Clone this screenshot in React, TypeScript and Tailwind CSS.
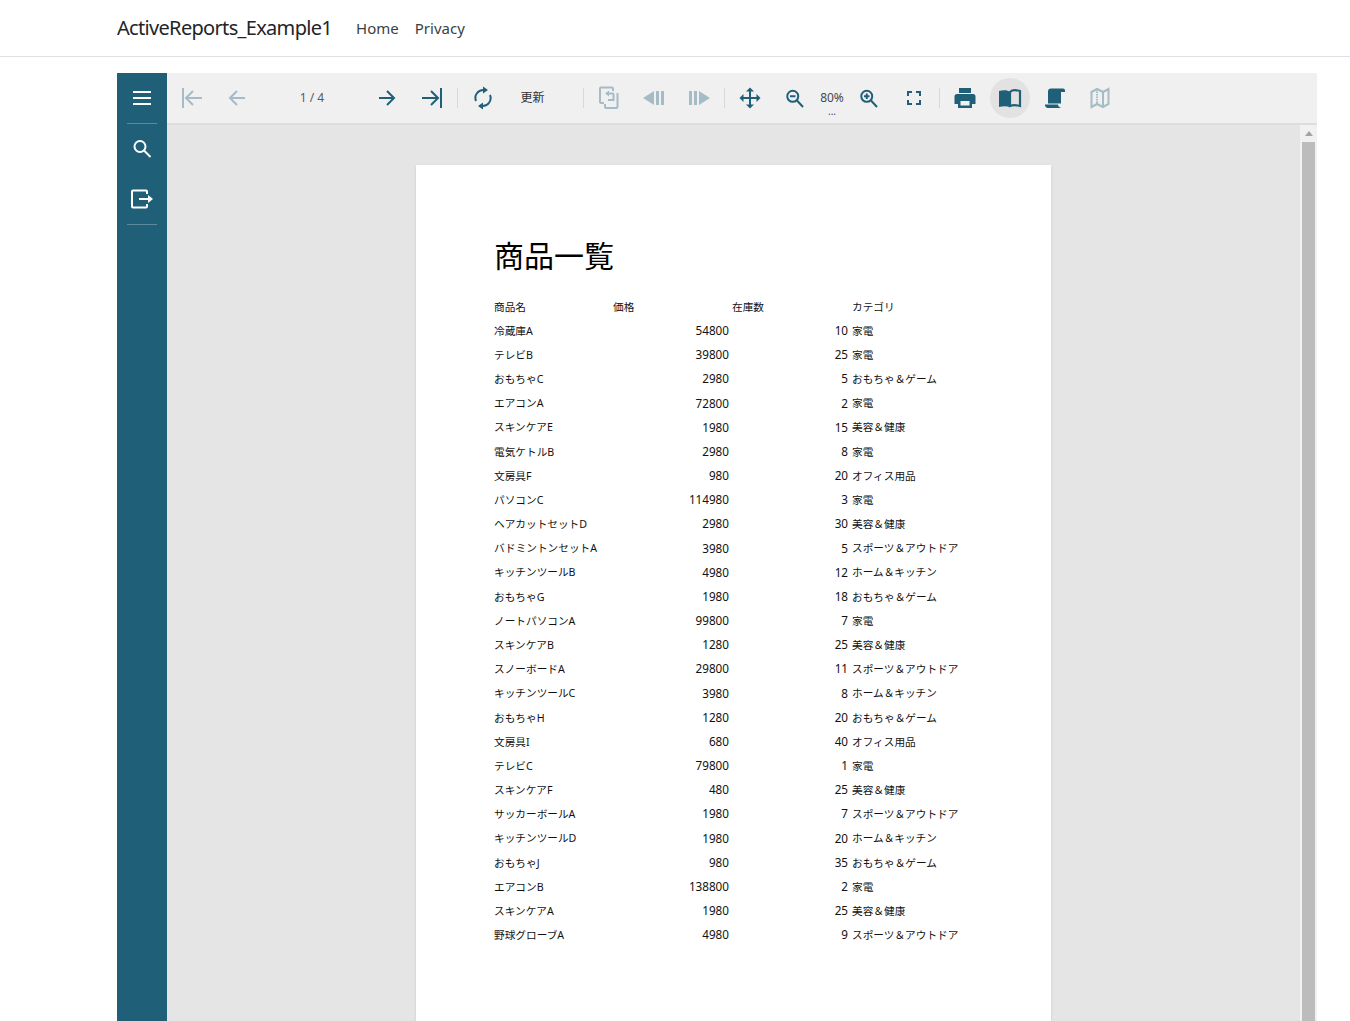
import type { ReactNode } from "react"

const rows: [string, number, number, string][] = [
  ["冷蔵庫A", 54800, 10, "家電"],
  ["テレビB", 39800, 25, "家電"],
  ["おもちゃC", 2980, 5, "おもちゃ＆ゲーム"],
  ["エアコンA", 72800, 2, "家電"],
  ["スキンケアE", 1980, 15, "美容＆健康"],
  ["電気ケトルB", 2980, 8, "家電"],
  ["文房具F", 980, 20, "オフィス用品"],
  ["パソコンC", 114980, 3, "家電"],
  ["ヘアカットセットD", 2980, 30, "美容＆健康"],
  ["バドミントンセットA", 3980, 5, "スポーツ＆アウトドア"],
  ["キッチンツールB", 4980, 12, "ホーム＆キッチン"],
  ["おもちゃG", 1980, 18, "おもちゃ＆ゲーム"],
  ["ノートパソコンA", 99800, 7, "家電"],
  ["スキンケアB", 1280, 25, "美容＆健康"],
  ["スノーボードA", 29800, 11, "スポーツ＆アウトドア"],
  ["キッチンツールC", 3980, 8, "ホーム＆キッチン"],
  ["おもちゃH", 1280, 20, "おもちゃ＆ゲーム"],
  ["文房具I", 680, 40, "オフィス用品"],
  ["テレビC", 79800, 1, "家電"],
  ["スキンケアF", 480, 25, "美容＆健康"],
  ["サッカーボールA", 1980, 7, "スポーツ＆アウトドア"],
  ["キッチンツールD", 1980, 20, "ホーム＆キッチン"],
  ["おもちゃJ", 980, 35, "おもちゃ＆ゲーム"],
  ["エアコンB", 138800, 2, "家電"],
  ["スキンケアA", 1980, 25, "美容＆健康"],
  ["野球グローブA", 4980, 9, "スポーツ＆アウトドア"],
]

function Icon({ children, off }: { children: ReactNode; off?: boolean }) {
  return (
    <svg viewBox="0 0 24 24" className={`w-6 h-6 ${off ? "text-[#a5bcc7]" : "text-[#205f78]"}`} fill="none" stroke="currentColor" strokeWidth="2">
      {children}
    </svg>
  )
}

function Btn({ children, active }: { children: ReactNode; active?: boolean }) {
  return (
    <div className="w-[45px] h-[50px] shrink-0 flex items-center justify-center">
      <div className={`w-10 h-10 rounded-full flex items-center justify-center ${active ? "bg-[#e2e2e2]" : ""}`}>{children}</div>
    </div>
  )
}

function Sep() {
  return (
    <div className="w-1.5 h-[50px] shrink-0 flex items-center justify-center">
      <div className="w-px h-5 bg-[#d9d9d9]" />
    </div>
  )
}

function Toolbar() {
  return (
    <div className="h-[52px] shrink-0 bg-[#f0f0f0] border-b-2 border-[#dddddd] flex pl-[2.5px]">
      <Btn><Icon off><path d="M3 2v20M22 12H6M13 5l-7 7 7 7" /></Icon></Btn>
      <Btn><Icon off><path d="M20 12H5M12 5l-7 7 7 7" /></Icon></Btn>
      <div className="w-[105px] h-[50px] shrink-0 flex items-center justify-center text-xs text-[#555c61]">1 / 4</div>
      <Btn><Icon><path d="M4 12h15M12 5l7 7-7 7" /></Icon></Btn>
      <Btn><Icon><path d="M21 2v20M2 12h16M11 5l7 7-7 7" /></Icon></Btn>
      <Sep />
      <Btn>
        <Icon>
          <path d="M5 15A8 8 0 0 1 13 4" />
          <path d="M19 9a8 8 0 0 1-8 11" />
          <path d="M12 0.500l5 3.500-5 3.500zM12 16.500l-5 3.500 5 3.500z" fill="currentColor" stroke="none" />
        </Icon>
      </Btn>
      <div className="w-[75px] h-[50px] shrink-0 flex items-center pl-[15px] text-xs text-[#333333]">更新</div>
      <Sep />
      <Btn>
        <Icon off>
          <path d="M7 17H4a1 1 0 0 1-1-1V2.500a1 1 0 0 1 1-1h11a1 1 0 0 1 1 1V5" />
          <path d="M20.500 7v14a1 1 0 0 1-1 1H9a1 1 0 0 1-1-1v-3" />
          <path d="M11 7.500h4.500a1 1 0 0 1 1 1V14H11" />
          <path d="M8 7.500l4-3v6z" fill="currentColor" stroke="none" />
        </Icon>
      </Btn>
      <Btn><Icon off><path d="M12 5v14L1 12zM14 5h3v14h-3zM19 5h3v14h-3z" fill="currentColor" stroke="none" /></Icon></Btn>
      <Btn><Icon off><path d="M12 5v14l11-7zM2 5h3v14H2zM7 5h3v14H7z" fill="currentColor" stroke="none" /></Icon></Btn>
      <Sep />
      <Btn>
        <Icon>
          <path d="M12 3v18M3 12h18" />
          <path d="M12 1.500l4 4H8zM12 22.500l-4-4h8zM1.500 12l4-4v8zM22.500 12l-4 4V8z" fill="currentColor" stroke="none" />
        </Icon>
      </Btn>
      <Btn><Icon><circle cx="9.750" cy="10.300" r="5.500" /><path d="M14 14.500l6 6.500M7 10.300h5.500" /></Icon></Btn>
      <div className="w-[29px] h-[50px] shrink-0 relative flex items-center justify-center text-xs text-[#444b50]">
        80%
        <span className="absolute left-0 right-0 top-[33px] text-center text-[10px] leading-[10px]">...</span>
      </div>
      <Btn><Icon><circle cx="9.750" cy="10.300" r="5.500" /><path d="M14 14.500l6 6.500M7 10.300h5.500M9.750 7.500v5.500" /></Icon></Btn>
      <Btn><Icon><path d="M6 10V6h4M14 6h4v4M18 14v4h-4M10 18H6v-4" /></Icon></Btn>
      <Sep />
      <Btn>
        <Icon>
          <path d="M6 2h12v5H6z" fill="currentColor" stroke="none" />
          <path fillRule="evenodd" d="M4 8h16a2.500 2.500 0 0 1 2.500 2.500V18H19v4H5v-4H1.500v-7.500A2.500 2.500 0 0 1 4 8zM7.500 15v4.500h9V15z" fill="currentColor" stroke="none" />
        </Icon>
      </Btn>
      <Btn active>
        <Icon>
          <path d="M12 6C10 4 5 4 1 5v16c4-1 8-1 11 0z" fill="currentColor" stroke="none" />
          <path d="M12 6c2-2 6.500-2 10-1v15c-3.500-1-7.500-1-10 0z" strokeWidth="2.200" />
        </Icon>
      </Btn>
      <Btn>
        <Icon>
          <path d="M8 2.500h12a2 2 0 0 1 2 2V6h-4v11.500H5V5.500a3 3 0 0 1 3-3z" fill="currentColor" stroke="none" />
          <path d="M2 18.500h13c0 1.500 1 2.500 3 3.500H5a3 3 0 0 1-3-3.500z" fill="currentColor" stroke="none" />
        </Icon>
      </Btn>
      <Btn>
        <Icon off>
          <path d="M3.500 6l5.500-3 6 3 5.500-3v15l-5.500 3-6-3-5.500 3z" />
          <path d="M9 3v15" strokeWidth="2" strokeDasharray="1.500 1" />
          <path d="M15 6v15" />
        </Icon>
      </Btn>
    </div>
  )
}

function Sidebar() {
  return (
    <div className="w-[50px] shrink-0 bg-[#205f78] flex flex-col items-center">
      <div className="h-[50px] flex items-center justify-center">
        <svg viewBox="0 0 24 24" className="w-6 h-6 text-white" fill="none" stroke="currentColor" strokeWidth="2"><path d="M3 6h18M3 12h18M3 18h18" /></svg>
      </div>
      <div className="w-[30px] h-px bg-[#5d8a9c]" />
      <div className="h-[50px] flex items-center justify-center">
        <svg viewBox="0 0 24 24" className="w-6 h-6 text-white" fill="none" stroke="currentColor" strokeWidth="2"><circle cx="10" cy="9.500" r="5.500" /><path d="M14 13.500l6.500 6.500" /></svg>
      </div>
      <div className="h-[50px] flex items-center justify-center">
        <svg viewBox="0 0 24 24" className="w-6 h-6 text-white" fill="none" stroke="currentColor" strokeWidth="2"><path d="M17 7V4.500a1 1 0 0 0-1-1H3a1 1 0 0 0-1 1v15a1 1 0 0 0 1 1h13a1 1 0 0 0 1-1V17M9 12h11" /><path d="M18 8l5 4-5 4z" fill="currentColor" stroke="none" /></svg>
      </div>
      <div className="w-[30px] h-px bg-[#5d8a9c]" />
    </div>
  )
}

export default function App() {
  return (
    <div className="h-[1021px] overflow-hidden bg-white font-['Noto_Sans','Noto_Sans_CJK_JP',sans-serif] text-[#212529]">
      <nav className="h-[57px] border-b border-[#dee2e6] pl-[117px] flex items-center">
        <span className="text-xl tracking-[-0.68px] mr-[24px]">ActiveReports_Example1</span>
        <span className="text-[15px] mr-[16px] text-[#3a3f44]">Home</span>
        <span className="text-[15px] text-[#3a3f44]">Privacy</span>
      </nav>
      <div className="mt-4 ml-[117px] w-[1200px] h-[948px] flex">
        <Sidebar />
        <div className="flex-1 flex flex-col min-w-0">
          <Toolbar />
          <div className="flex-1 flex min-h-0">
            <div className="flex-1 bg-[#e5e5e5] flex justify-center pt-10 overflow-hidden">
              <div className="w-[635px] h-[900px] shrink-0 bg-white shadow-sm pl-[78px] pt-[67px] text-black">
                <h1 className="text-[30px] leading-[44px] mb-[18.5px] font-['Noto_Sans_CJK_JP',sans-serif]">商品一覧</h1>
                <div className="grid grid-cols-[119px_119px_119px_200px] auto-rows-[24.18px] items-center text-[10.67px] text-[#111111]">
                  <span>商品名</span>
                  <span>価格</span>
                  <span>在庫数</span>
                  <span className="pl-px">カテゴリ</span>
                  {rows.map((r) => (
                    <div key={r[0]} className="contents">
                      <span>{r[0]}</span>
                      <span className="text-right pr-[3px] text-[11.7px]">{r[1]}</span>
                      <span className="text-right pr-[3px] text-[11.7px]">{r[2]}</span>
                      <span className="pl-px">{r[3]}</span>
                    </div>
                  ))}
                </div>
              </div>
            </div>
            <div className="w-[17px] shrink-0 bg-[#f1f1f1] flex flex-col items-center">
              <div className="h-[17px] flex items-center justify-center">
                <div className="w-0 h-0 border-x-4 border-x-transparent border-b-[5px] border-b-[#a3a3a3]" />
              </div>
              <div className="w-[13px] flex-1 bg-[#bcbcbc]" />
            </div>
          </div>
        </div>
      </div>
    </div>
  )
}
